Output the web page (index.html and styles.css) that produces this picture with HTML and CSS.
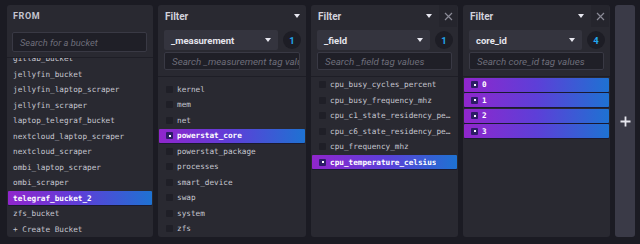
FILE: index.html
```html
<!DOCTYPE html>
<html>
<head>
<meta charset="utf-8">
<link rel="stylesheet" href="styles.css">
</head>
<body>
<div class="builder">
  <section class="panel from">
    <header class="head"><span class="title caps">FROM</span></header>
    <div class="ctrl from-ctrl">
      <div class="search">Search for a bucket</div>
    </div>
    <div class="list">
      <div class="inner shift-from">
        <div class="row plain">gitlab_bucket</div>
        <div class="row plain">jellyfin_bucket</div>
        <div class="row plain">jellyfin_laptop_scraper</div>
        <div class="row plain">jellyfin_scraper</div>
        <div class="row plain">laptop_telegraf_bucket</div>
        <div class="row plain">nextcloud_laptop_scraper</div>
        <div class="row plain">nextcloud_scraper</div>
        <div class="row plain">ombi_laptop_scraper</div>
        <div class="row plain">ombi_scraper</div>
        <div class="row plain sel">telegraf_bucket_2</div>
        <div class="row plain">zfs_bucket</div>
        <div class="row plain">+ Create Bucket</div>
      </div>
    </div>
  </section>

  <section class="panel w148">
    <header class="head"><span class="title">Filter</span><span class="caret hcaret"></span></header>
    <div class="ctrl">
      <div class="pick-row">
        <div class="drop"><span>_measurement</span><span class="caret"></span></div>
        <div class="badge">1</div>
      </div>
      <div class="search wide">Search _measurement tag values</div>
    </div>
    <div class="list">
      <div class="inner shift-m">
        <div class="row"><i class="cb"></i>kernel</div>
        <div class="row"><i class="cb"></i>mem</div>
        <div class="row"><i class="cb"></i>net</div>
        <div class="row sel"><i class="cb"></i>powerstat_core</div>
        <div class="row"><i class="cb"></i>powerstat_package</div>
        <div class="row"><i class="cb"></i>processes</div>
        <div class="row"><i class="cb"></i>smart_device</div>
        <div class="row"><i class="cb"></i>swap</div>
        <div class="row"><i class="cb"></i>system</div>
        <div class="row"><i class="cb"></i>zfs</div>
      </div>
    </div>
  </section>

  <section class="panel">
    <header class="head"><span class="title">Filter</span><span class="caret hcaret2"></span><span class="close"><svg width="9" height="9" viewBox="0 0 9 9"><path d="M1 1L8 8M8 1L1 8" stroke="#8a8a96" stroke-width="1.2"/></svg></span></header>
    <div class="ctrl">
      <div class="pick-row">
        <div class="drop"><span>_field</span><span class="caret"></span></div>
        <div class="badge">1</div>
      </div>
      <div class="search wide">Search _field tag values</div>
    </div>
    <div class="list">
      <div class="inner shift-f">
        <div class="row"><i class="cb"></i><span class="txt">cpu_busy_cycles_percent</span></div>
        <div class="row"><i class="cb"></i><span class="txt">cpu_busy_frequency_mhz</span></div>
        <div class="row"><i class="cb"></i><span class="txt">cpu_c1_state_residency_percent</span></div>
        <div class="row"><i class="cb"></i><span class="txt">cpu_c6_state_residency_percent</span></div>
        <div class="row"><i class="cb"></i><span class="txt">cpu_frequency_mhz</span></div>
        <div class="row sel"><i class="cb"></i><span class="txt">cpu_temperature_celsius</span></div>
      </div>
    </div>
  </section>

  <section class="panel">
    <header class="head"><span class="title">Filter</span><span class="caret hcaret2"></span><span class="close"><svg width="9" height="9" viewBox="0 0 9 9"><path d="M1 1L8 8M8 1L1 8" stroke="#8a8a96" stroke-width="1.2"/></svg></span></header>
    <div class="ctrl">
      <div class="pick-row">
        <div class="drop"><span>core_id</span><span class="caret"></span></div>
        <div class="badge">4</div>
      </div>
      <div class="search wide">Search core_id tag values</div>
    </div>
    <div class="list">
      <div class="inner shift-f">
        <div class="row sel"><i class="cb"></i>0</div>
        <div class="row sel"><i class="cb"></i>1</div>
        <div class="row sel"><i class="cb"></i>2</div>
        <div class="row sel"><i class="cb"></i>3</div>
      </div>
    </div>
  </section>

  <div class="add">
    <svg width="11" height="11" viewBox="0 0 11 11"><path d="M5.5 0.5V10.5M0.5 5.5H10.5" stroke="#e6e6ee" stroke-width="1.8"/></svg>
  </div>
</div>
</body>
</html>
```

FILE: styles.css
```css
* { box-sizing: border-box; }
html, body { margin: 0; padding: 0; }
body {
  background: #1b1b23;
  width: 640px;
  height: 244px;
  overflow: hidden;
  font-family: Roboto, "Liberation Sans", sans-serif;
}
.builder {
  display: flex;
  gap: 5px;
  padding: 5px 5px 7px 7px;
  height: 244px;
}
.panel {
  width: 147px;
  flex: none;
  background: #292931;
  border-radius: 3px;
  display: flex;
  flex-direction: column;
  overflow: hidden;
}
.from { width: 146px; }
.w148 { width: 148px; }
.head {
  height: 22px;
  flex: none;
  display: flex;
  align-items: center;
  padding-left: 7px;
}
.title {
  font-weight: 700;
  font-size: 10px;
  color: #d2d2dc;
}
.caps {
  font-size: 9px;
  letter-spacing: 0.6px;
  color: #c4c4ce;
  margin-left: -1px;
}
.caret {
  width: 0;
  height: 0;
  border-left: 3.5px solid transparent;
  border-right: 3.5px solid transparent;
  border-top: 4px solid #e8e8f0;
}
.hcaret { margin-left: auto; margin-right: 6.5px; }
.hcaret2 { margin-left: auto; margin-right: 7px; }
.close {
  width: 18px;
  height: 22px;
  background: #25252d;
  display: flex;
  align-items: center;
  justify-content: center;
  margin-right: 1px;
}
.ctrl {
  flex: none;
  padding: 3px 5px 6px 6px;
  display: flex;
  flex-direction: column;
  gap: 2px;
  border-bottom: 1px solid #1e1e26;
}
.from-ctrl {
  padding: 5px 6px 5px 5px;
}
.pick-row {
  display: flex;
  align-items: center;
  gap: 5px;
  height: 20px;
}
.drop {
  flex: 1;
  height: 20px;
  background: #34343e;
  border-radius: 2px;
  display: flex;
  align-items: center;
  justify-content: space-between;
  padding: 0 7px 0 7px;
  font-weight: 700;
  font-size: 9.5px;
  color: #e4e4ec;
}
.badge {
  width: 18px;
  height: 18px;
  border-radius: 50%;
  background: #1d1d25;
  color: #22a7f0;
  font-weight: 700;
  font-size: 9.5px;
  display: flex;
  align-items: center;
  justify-content: center;
  flex: none;
}
.search {
  height: 18px;
  margin-right: 1px;
  background: #1f1f27;
  border: 1px solid #393944;
  border-radius: 2px;
  font-style: italic;
  font-size: 9.3px;
  color: #6e6e7a;
  padding-left: 7px;
  display: flex;
  align-items: center;
  white-space: nowrap;
  overflow: hidden;
}
.search.wide { font-size: 9.8px; }
.from-ctrl .search { height: 20px; margin-right: 0; }
.list {
  flex: 1;
  overflow: hidden;
}
.inner { display: flex; flex-direction: column; }
.shift-from { margin-top: -6.5px; }
.shift-m { margin-top: 5px; }
.shift-f { margin-top: 0.8px; }
.row {
  height: 14px;
  margin: 0 1px 1.5px 1px;
  display: flex;
  align-items: center;
  font-family: "DejaVu Sans Mono", "Liberation Mono", monospace;
  font-size: 7.7px;
  color: #c6c6d0;
  padding-left: 7px;
  white-space: nowrap;
  border-radius: 1px;
}
.row.plain { padding-left: 5px; }
.txt {
  overflow: hidden;
  text-overflow: ellipsis;
  max-width: 122px;
}
.sel {
  background: linear-gradient(90deg, #9026cc 0%, #5d3fd8 50%, #1e72d2 100%);
  color: #ffffff;
  font-weight: 700;
  box-shadow: 0 1px 0 #1a1a30;
}
.cb {
  width: 7px;
  height: 7px;
  background: #1f1f27;
  border-radius: 1px;
  margin-right: 4px;
  flex: none;
  position: relative;
}
.sel .cb { background: #2c1d66; }
.sel .cb::after {
  content: "";
  position: absolute;
  left: 2.5px;
  top: 2.5px;
  width: 2px;
  height: 2px;
  background: #fff;
}
.add {
  width: 20px;
  flex: none;
  background: #3a3a47;
  border-radius: 3px;
  display: flex;
  align-items: center;
  justify-content: center;
}
```
